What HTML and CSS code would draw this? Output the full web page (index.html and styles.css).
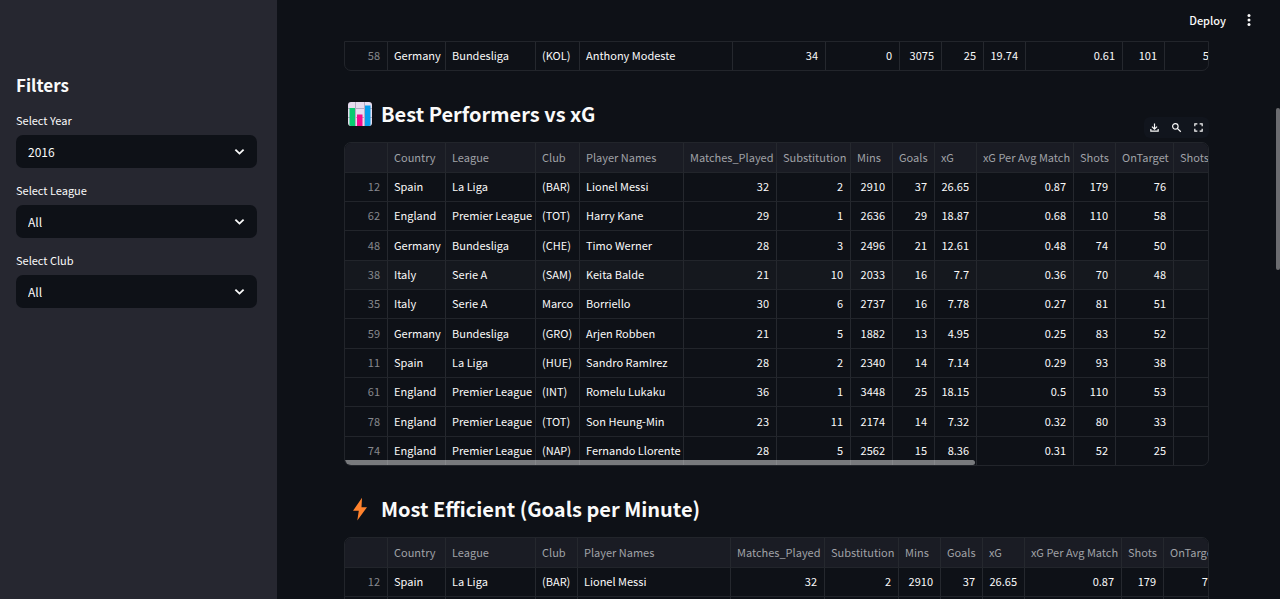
FILE: index.html
```html
<!DOCTYPE html>
<html lang="en">
<head>
<meta charset="utf-8">
<title>Football Dashboard</title>
<link rel="stylesheet" href="styles.css">
</head>
<body>
<div class="app">
  <aside class="sidebar">
    <h2 class="sidebar-title">Filters</h2>
    <div class="field">
      <label for="year">Select Year</label>
      <div class="select-box">
        <select id="year"><option>2016</option></select>
        <svg class="chevron" viewBox="0 0 12 12"><path d="M2.200 4.200 6 7.900l3.800-3.700"/></svg>
      </div>
    </div>
    <div class="field">
      <label for="league">Select League</label>
      <div class="select-box">
        <select id="league"><option>All</option></select>
        <svg class="chevron" viewBox="0 0 12 12"><path d="M2.200 4.200 6 7.900l3.800-3.700"/></svg>
      </div>
    </div>
    <div class="field">
      <label for="club">Select Club</label>
      <div class="select-box">
        <select id="club"><option>All</option></select>
        <svg class="chevron" viewBox="0 0 12 12"><path d="M2.200 4.200 6 7.900l3.800-3.700"/></svg>
      </div>
    </div>
  </aside>
  <main class="main">
    <header class="topbar">
      <button class="deploy" type="button">Deploy</button>
      <button class="menu" type="button" aria-label="Menu">
        <svg viewBox="0 0 4 12"><circle cx="2" cy="1.600" r="1.500"/><circle cx="2" cy="6" r="1.500"/><circle cx="2" cy="10.400" r="1.500"/></svg>
      </button>
    </header>
    <div class="content">
      <div class="grid grid-tail">
        <table>
          <colgroup><col class="w43"><col class="w58"><col class="w90"><col class="w44"><col class="w153"><col class="w93"><col class="w74"><col class="w42"><col class="w42"><col class="w42"><col class="w97"><col class="w42"><col class="w58"></colgroup>
          <tbody>
            <tr><th scope="row">58</th><td>Germany</td><td>Bundesliga</td><td>(KOL)</td><td>Anthony Modeste</td><td>34</td><td>0</td><td>3075</td><td>25</td><td>19.74</td><td>0.61</td><td>101</td><td>50</td></tr>
          </tbody>
        </table>
      </div>

      <section class="block">
        <h2 class="heading">
          <svg class="emoji" viewBox="0 0 24 24"><rect width="24" height="24" rx="3" fill="#e6dcef"/><path d="M0 6.500h24M0 15.500h24M7.500 0v24M16.500 0v24" stroke="#b4a9c4" stroke-width="1" fill="none"/><path d="M1.500 6h5.500v18H3a2 2 0 0 1-1.500-.7z" fill="#0acb70"/><path d="M9 12.500h5.500V24H9z" fill="#f70a8d"/><path d="M17 3.500h5.500v19.800A2 2 0 0 1 21 24h-4z" fill="#069fee"/></svg>
          <span>Best Performers vs xG</span>
        </h2>
        <div class="tools">
          <button type="button" aria-label="Download"><svg viewBox="0 0 24 24"><path d="M12 3v12M6.500 10l5.500 5.500 5.500-5.500M4 15.500V20h16v-4.500"/></svg></button>
          <button type="button" aria-label="Search"><svg viewBox="0 0 24 24"><circle cx="9.500" cy="9.500" r="6"/><path d="m13.800 13.800 7.500 7.500"/></svg></button>
          <button type="button" aria-label="Fullscreen"><svg viewBox="0 0 24 24"><path d="M4 9.500V4h5.500M14.500 4H20v5.500M20 14.500V20h-5.500M9.500 20H4v-5.500"/></svg></button>
        </div>
        <div class="grid">
          <table>
            <colgroup><col class="w43"><col class="w58"><col class="w90"><col class="w44"><col class="w104"><col class="w93"><col class="w74"><col class="w42"><col class="w42"><col class="w42"><col class="w97"><col class="w42"><col class="w58"><col class="w90"></colgroup>
            <thead><tr><th></th><th>Country</th><th>League</th><th>Club</th><th>Player Names</th><th>Matches_Played</th><th>Substitution</th><th>Mins</th><th>Goals</th><th>xG</th><th>xG Per Avg Match</th><th>Shots</th><th>OnTarget</th><th>Shots</th></tr></thead>
            <tbody>
              <tr><th scope="row">12</th><td>Spain</td><td>La Liga</td><td>(BAR)</td><td>Lionel Messi</td><td>32</td><td>2</td><td>2910</td><td>37</td><td>26.65</td><td>0.87</td><td>179</td><td>76</td><td></td></tr>
              <tr><th scope="row">62</th><td>England</td><td>Premier League</td><td>(TOT)</td><td>Harry Kane</td><td>29</td><td>1</td><td>2636</td><td>29</td><td>18.87</td><td>0.68</td><td>110</td><td>58</td><td></td></tr>
              <tr><th scope="row">48</th><td>Germany</td><td>Bundesliga</td><td>(CHE)</td><td>Timo Werner</td><td>28</td><td>3</td><td>2496</td><td>21</td><td>12.61</td><td>0.48</td><td>74</td><td>50</td><td></td></tr>
              <tr class="hovered"><th scope="row">38</th><td>Italy</td><td>Serie A</td><td>(SAM)</td><td>Keita Balde</td><td>21</td><td>10</td><td>2033</td><td>16</td><td>7.7</td><td>0.36</td><td>70</td><td>48</td><td></td></tr>
              <tr><th scope="row">35</th><td>Italy</td><td>Serie A</td><td>Marco</td><td>Borriello</td><td>30</td><td>6</td><td>2737</td><td>16</td><td>7.78</td><td>0.27</td><td>81</td><td>51</td><td></td></tr>
              <tr><th scope="row">59</th><td>Germany</td><td>Bundesliga</td><td>(GRO)</td><td>Arjen Robben</td><td>21</td><td>5</td><td>1882</td><td>13</td><td>4.95</td><td>0.25</td><td>83</td><td>52</td><td></td></tr>
              <tr><th scope="row">11</th><td>Spain</td><td>La Liga</td><td>(HUE)</td><td>Sandro RamIrez</td><td>28</td><td>2</td><td>2340</td><td>14</td><td>7.14</td><td>0.29</td><td>93</td><td>38</td><td></td></tr>
              <tr><th scope="row">61</th><td>England</td><td>Premier League</td><td>(INT)</td><td>Romelu Lukaku</td><td>36</td><td>1</td><td>3448</td><td>25</td><td>18.15</td><td>0.5</td><td>110</td><td>53</td><td></td></tr>
              <tr><th scope="row">78</th><td>England</td><td>Premier League</td><td>(TOT)</td><td>Son Heung-Min</td><td>23</td><td>11</td><td>2174</td><td>14</td><td>7.32</td><td>0.32</td><td>80</td><td>33</td><td></td></tr>
              <tr><th scope="row">74</th><td>England</td><td>Premier League</td><td>(NAP)</td><td>Fernando Llorente</td><td>28</td><td>5</td><td>2562</td><td>15</td><td>8.36</td><td>0.31</td><td>52</td><td>25</td><td></td></tr>
            </tbody>
          </table>
          <div class="scroll-x"></div>
        </div>
      </section>

      <section class="block">
        <h2 class="heading">
          <svg class="emoji" viewBox="0 0 24 24"><path d="M14 .8 5 13.800h5.800L9.300 23.600 19 10.200h-5.500z" fill="#ff822d"/></svg>
          <span>Most Efficient (Goals per Minute)</span>
        </h2>
        <div class="grid">
          <table>
            <colgroup><col class="w43"><col class="w58"><col class="w90"><col class="w42"><col class="w153"><col class="w94"><col class="w74"><col class="w42"><col class="w42"><col class="w42"><col class="w97"><col class="w42"><col class="w58"></colgroup>
            <thead><tr><th></th><th>Country</th><th>League</th><th>Club</th><th>Player Names</th><th>Matches_Played</th><th>Substitution</th><th>Mins</th><th>Goals</th><th>xG</th><th>xG Per Avg Match</th><th>Shots</th><th>OnTarget</th></tr></thead>
            <tbody>
              <tr><th scope="row">12</th><td>Spain</td><td>La Liga</td><td>(BAR)</td><td>Lionel Messi</td><td>32</td><td>2</td><td>2910</td><td>37</td><td>26.65</td><td>0.87</td><td>179</td><td>76</td></tr>
              <tr><th></th><td></td><td></td><td></td><td></td><td></td><td></td><td></td><td></td><td></td><td></td><td></td><td></td></tr>
            </tbody>
          </table>
        </div>
      </section>
    </div>
    <div class="scroll-y"></div>
  </main>
</div>
</body>
</html>
```
FILE: styles.css
```css
* { box-sizing: border-box; }

body {
  margin: 0;
  background: #0e1117;
  color: #fafafa;
  font-family: "Noto Sans CJK SC", "Noto Sans", sans-serif;
  font-size: 11px;
  line-height: 16px;
}

button {
  border: 0;
  padding: 0;
  background: none;
  color: inherit;
  font: inherit;
}

.app {
  display: flex;
  height: 100vh;
  overflow: hidden;
}

.sidebar {
  flex: 0 0 277px;
  padding: 71px 20px 0 16px;
  background: #262730;
}

.sidebar-title {
  margin: 0 0 13px;
  font-size: 17px;
  font-weight: 700;
  line-height: 28px;
}

.field {
  display: flex;
  flex-direction: column;
  gap: 7px;
  margin-bottom: 14px;
}

.select-box { position: relative; }

.select-box select {
  display: block;
  width: 100%;
  height: 33px;
  padding: 0 12px;
  border: 0;
  border-radius: 7px;
  appearance: none;
  background: #0e1117;
  color: #fafafa;
  font-family: inherit;
  font-size: 12px;
}

.chevron {
  position: absolute;
  top: 10px;
  right: 11px;
  width: 13px;
  height: 13px;
  fill: none;
  stroke: #fafafa;
  stroke-width: 1.700;
  pointer-events: none;
}

.main {
  position: relative;
  flex: 1;
  min-width: 0;
}

.topbar {
  display: flex;
  align-items: center;
  justify-content: flex-end;
  gap: 21px;
  height: 41px;
  padding: 0 29px 2px 0;
}

.deploy {
  font-size: 11px;
  font-weight: 500;
}

.menu svg {
  display: block;
  width: 4px;
  height: 12px;
  fill: #fafafa;
}

.content { padding: 0 71px 0 67px; }

.block { position: relative; }

.heading {
  display: flex;
  align-items: center;
  gap: 9px;
  margin: 0;
  padding: 27px 0 12px 4px;
  font-size: 20px;
  font-weight: 700;
  line-height: 32px;
}

.emoji {
  width: 24px;
  height: 24px;
}

.tools {
  position: absolute;
  top: 46px;
  right: 0;
  display: flex;
  align-items: center;
  gap: 11px;
  height: 21px;
  padding: 0 5px;
  border-radius: 6px;
  background: #11151d;
}

.tools svg {
  display: block;
  width: 11px;
  height: 11px;
  fill: none;
  stroke: #fafafa;
  stroke-width: 2.600;
}

.grid {
  position: relative;
  overflow: hidden;
  border: 1px solid #22252b;
  border-radius: 7px;
}

.grid-tail {
  border-radius: 0 0 7px 7px;
}

table {
  width: 0;
  table-layout: fixed;
  border-collapse: separate;
  border-spacing: 0;
}

.w42 { width: 42px; }
.w43 { width: 43px; }
.w44 { width: 44px; }
.w58 { width: 58px; }
.w74 { width: 74px; }
.w90 { width: 90px; }
.w93 { width: 93px; }
.w94 { width: 94px; }
.w97 { width: 97px; }
.w104 { width: 104px; }
.w153 { width: 153px; }

th, td {
  height: 29px;
  padding: 0 7px 2px 6px;
  border-right: 1px solid #25282e;
  border-bottom: 1px solid #22252b;
  font-weight: 400;
  text-align: right;
  white-space: nowrap;
}

tbody tr:nth-child(3n) > * { height: 30px; }

tbody tr:last-child > * {
  height: 28px;
  border-bottom: 0;
}

td:nth-child(-n+5) { text-align: left; }

tbody th { color: #86888d; }

thead th {
  height: 30px;
  background: #1a1c24;
  color: #a0a2a7;
  text-align: left;
}

.hovered > * { background: #15181e; }

.scroll-x {
  position: absolute;
  bottom: 0;
  left: 0;
  width: 73%;
  height: 5px;
  border-radius: 0 3px 3px 3px;
  background: rgba(250, 250, 250, 0.45);
}

.scroll-y {
  position: absolute;
  top: 18%;
  right: 0;
  width: 4px;
  height: 27%;
  border-radius: 2px;
  background: #6b6c70;
}
```
